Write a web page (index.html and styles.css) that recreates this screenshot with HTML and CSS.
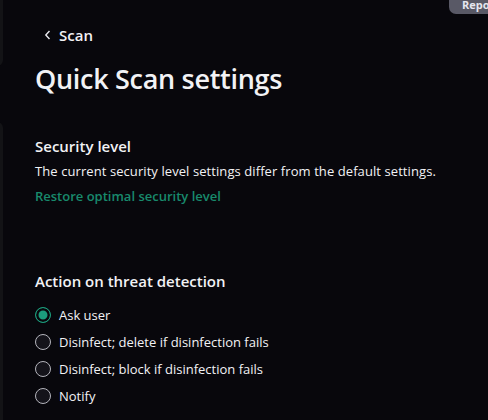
FILE: index.html
```html
<!DOCTYPE html>
<html>
<head>
    <meta charset="utf-8" />
    <title>Quick Scan settings</title>
    <link rel="stylesheet" href="styles.css">
</head>

<body>
    <div class="side-edge top"></div>
    <div class="side-edge bottom"></div>
    <div class="report-tab">Repo</div>

    <div class="page">
        <a class="back-link" href="#">
            <svg class="chevron" width="8" height="10" viewBox="0 0 8 10">
                <path d="M5.5 1 L1.8 5 L5.5 9" fill="none" stroke="#e8e8ee" stroke-width="1.4" />
            </svg>
            <span>Scan</span>
        </a>

        <h1>Quick Scan settings</h1>

        <div class="section security">
            <h2>Security level</h2>
            <p class="desc">The current security level settings differ from the default settings.</p>
            <a class="restore" href="#">Restore optimal security level</a>
        </div>

        <div class="section action">
            <h2>Action on threat detection</h2>
            <div class="radio-list">
                <label class="radio checked"><span class="dot"></span>Ask user</label>
                <label class="radio"><span class="dot"></span>Disinfect; delete if disinfection fails</label>
                <label class="radio"><span class="dot"></span>Disinfect; block if disinfection fails</label>
                <label class="radio"><span class="dot"></span>Notify</label>
            </div>
        </div>
    </div>
</body>
</html>
```

FILE: styles.css
```css
* {
    margin: 0px;
    padding: 0px;
    box-sizing: border-box;
}

html {
    background-color: #08070c;
}

body {
    color: #f2f2f5;
    font-family: "Open Sans", "Noto Sans", sans-serif;
    width: 488px;
    height: 420px;
    overflow: hidden;
    position: relative;
}

.side-edge {
    position: absolute;
    left: -6px;
    width: 9px;
    background-color: #131316;
    border-radius: 0px 6px 6px 0px;
}

.side-edge.top {
    top: -10px;
    height: 76px;
}

.side-edge.bottom {
    top: 122px;
    height: 298px;
    border-radius: 0px 6px 0px 0px;
}

.report-tab {
    position: absolute;
    top: -10px;
    left: 449px;
    width: 39px;
    height: 24px;
    padding: 8px 0px 0px 13px;
    background-color: #595966;
    border-radius: 7px 0px 0px 7px;
    color: #e6e6ee;
    font-size: 11px;
    font-weight: 700;
    line-height: 14px;
    white-space: nowrap;
    overflow: hidden;
}

.page {
    padding: 24px 0px 0px 35px;
}

.back-link {
    display: flex;
    align-items: center;
    gap: 7px;
    padding-left: 9px;
    color: #f2f2f5;
    text-decoration: none;
    font-size: 15px;
    font-weight: 600;
    height: 22px;
}

h1 {
    margin-top: 15px;
    font-size: 27px;
    font-weight: 600;
    line-height: 36px;
    letter-spacing: -0.3px;
}

.section h2 {
    font-size: 15px;
    font-weight: 600;
    line-height: 20px;
}

.security {
    margin-top: 39px;
}

.desc {
    margin-top: 6px;
    font-size: 13px;
    line-height: 18px;
    letter-spacing: 0.08px;
}

.restore {
    display: block;
    margin-top: 7px;
    color: #188a6c;
    text-decoration: none;
    font-size: 13px;
    font-weight: 600;
    line-height: 18px;
}

.action {
    margin-top: 66px;
}

.radio-list {
    margin-top: 15px;
    display: flex;
    flex-direction: column;
    gap: 9px;
}

.radio {
    display: flex;
    align-items: center;
    gap: 8px;
    height: 18px;
    font-size: 13px;
}

.dot {
    width: 16px;
    height: 16px;
    border-radius: 50%;
    border: 1.5px solid #b4b4bc;
    background-color: #14131a;
}

.radio.checked .dot {
    border-color: #1c9c7c;
    background-color: #1c9c7c;
    box-shadow: inset 0px 0px 0px 2.5px #08070c;
}
```
